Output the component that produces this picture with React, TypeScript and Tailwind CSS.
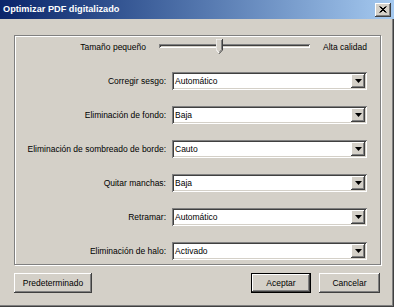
const rows = [
  { label: "Corregir sesgo:", value: "Automático" },
  { label: "Eliminación de fondo:", value: "Baja" },
  { label: "Eliminación de sombreado de borde:", value: "Cauto" },
  { label: "Quitar manchas:", value: "Baja" },
  { label: "Retramar:", value: "Automático" },
  { label: "Eliminación de halo:", value: "Activado" },
];

const raised =
  "bg-[#d4d0c8] shadow-[inset_-1px_-1px_0_#404040,inset_1px_1px_0_#ffffff,inset_-2px_-2px_0_#808080,inset_2px_2px_0_#d4d0c8]";

function Combo({ value }: { value: string }) {
  return (
    <div className="flex h-[18px] w-[195px] bg-white p-[2px] shadow-[inset_1px_1px_0_#808080,inset_-1px_-1px_0_#ffffff,inset_2px_2px_0_#404040,inset_-2px_-2px_0_#d4d0c8]">
      <div className="flex-1 pl-[1px] leading-[14px]">{value}</div>
      <div className={`flex h-[14px] w-[14px] items-center justify-center ${raised}`}>
        <svg width="7" height="4" viewBox="0 0 7 4">
          <path d="M0 0h7L3.5 4z" fill="#000" />
        </svg>
      </div>
    </div>
  );
}

function Slider() {
  return (
    <div className="relative h-[16px] w-[151px]">
      <div className="absolute left-0 right-0 top-[5px] h-[4px] shadow-[inset_1px_1px_0_#808080,inset_-1px_-1px_0_#ffffff,inset_2px_2px_0_#404040]" />
      <svg className="absolute left-[57px] top-0" width="7" height="15" viewBox="0 0 7 15">
        <path d="M0 0h6v11l-3 3.5L0 11z" fill="#d4d0c8" />
        <path d="M0 11V0h6" stroke="#fff" fill="none" strokeWidth="1" />
        <path d="M6.5 0v11l-3.5 3.8" stroke="#404040" fill="none" strokeWidth="1" />
        <path d="M5.5 1v9.6l-2.5 3" stroke="#808080" fill="none" strokeWidth="1" />
        <path d="M0.5 11l2.5 3" stroke="#fff" fill="none" strokeWidth="1" />
      </svg>
    </div>
  );
}

function Button({ label, primary, width }: { label: string; primary?: boolean; width: string }) {
  return (
    <div
      className={`flex h-[20px] items-center justify-center ${width} ${
        primary
          ? "bg-[#d4d0c8] shadow-[inset_0_0_0_1px_#000000,inset_-2px_-2px_0_#404040,inset_2px_2px_0_#ffffff,inset_-3px_-3px_0_#808080]"
          : raised
      }`}
    >
      {label}
    </div>
  );
}

export default function App() {
  return (
    <div
      className="flex h-[307px] w-[394px] flex-col bg-[#d4d0c8] text-[8.5px] text-black shadow-[inset_-1px_-1px_0_#404040,inset_-2px_-2px_0_#808080]"
      style={{ fontFamily: "'Liberation Sans', Arial, sans-serif" }}
    >
      <div className="flex h-[19px] items-center justify-between bg-gradient-to-r from-[#0a246a] to-[#a6caf0] pl-[3px] pr-[3px]">
        <span className="text-[9.2px] font-bold text-white">Optimizar PDF digitalizado</span>
        <div className={`flex h-[14px] w-[16px] items-center justify-center ${raised}`}>
          <svg width="8" height="7" viewBox="0 0 8 7">
            <path d="M0.5 0.5l6 6M1.5 0.5l6 6M6.5 0.5l-6 6M7.5 0.5l-6 6" stroke="#000" strokeWidth="1" />
          </svg>
        </div>
      </div>

      <div className="ml-[14px] mr-[13px] mt-[16px] flex h-[230px] flex-col border border-[#808080] pt-[3px] shadow-[1px_1px_0_#ffffff,inset_1px_1px_0_#ffffff]">
        <div className="flex h-[16px] items-center">
          <span className="w-[131px] text-right">Tamaño pequeño</span>
          <div className="ml-[13px]">
            <Slider />
          </div>
          <span className="ml-[13px]">Alta calidad</span>
        </div>
        <div className="mt-[17px] flex flex-col gap-[16px]">
          {rows.map((row) => (
            <div key={row.label} className="flex h-[18px] items-center">
              <span className="w-[151px] whitespace-nowrap text-right">{row.label}</span>
              <div className="ml-[6px]">
                <Combo value={row.value} />
              </div>
            </div>
          ))}
        </div>
      </div>

      <div className="mx-[14px] mt-[8px] flex">
        <Button label="Predeterminado" width="w-[78px]" />
        <div className="flex-1" />
        <Button label="Aceptar" primary width="w-[60px]" />
        <div className="w-[8px]" />
        <Button label="Cancelar" width="w-[61px]" />
      </div>
    </div>
  );
}
